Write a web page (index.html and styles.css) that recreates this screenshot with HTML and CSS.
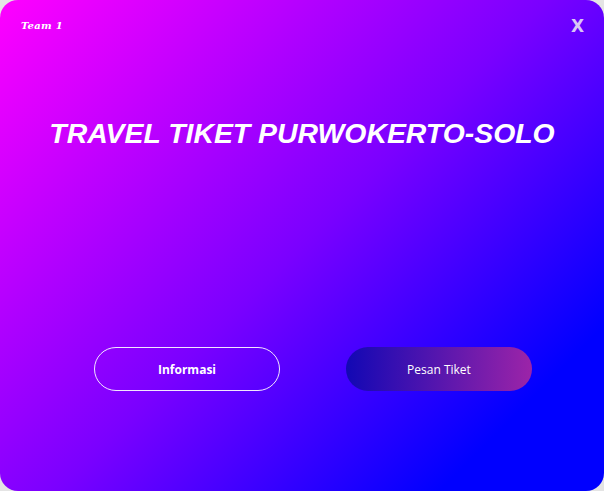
FILE: index.html
```html
<!DOCTYPE html>
<html>
<head>
<meta charset="utf-8">
<link rel="stylesheet" href="styles.css">
</head>
<body>
<div class="window">
  <div class="topbar">
    <span class="team">Team 1</span>
    <span class="close">X</span>
  </div>
  <h1 class="title">TRAVEL TIKET PURWOKERTO-SOLO</h1>
  <div class="actions">
    <button class="btn btn-outline">Informasi</button>
    <button class="btn btn-fill">Pesan Tiket</button>
  </div>
</div>
</body>
</html>
```
FILE: styles.css
```css
html, body { margin: 0; padding: 0; }
body {
  width: 604px;
  height: 491px;
  background: #e4e4e4;
  overflow: hidden;
}
.window {
  width: 604px;
  height: 491px;
  box-sizing: border-box;
  border-radius: 18px;
  background: linear-gradient(135deg, #ff00ff 0%, #7a00ff 50%, #0000ff 85%, #0000ff 100%);
  display: flex;
  flex-direction: column;
  font-family: "Open Sans", "DejaVu Sans", sans-serif;
  color: #fff;
}
.topbar {
  display: flex;
  justify-content: space-between;
  align-items: center;
  padding: 14px 20px 0 21px;
  height: 22px;
}
.team {
  font-family: "DejaVu Serif", serif;
  font-style: italic;
  font-weight: bold;
  font-size: 10px;
  letter-spacing: 0.3px;
}
.close {
  font-family: "DejaVu Sans", sans-serif;
  font-weight: bold;
  font-size: 17px;
  color: #d9c6f5;
  margin-top: 2px;
}
.title {
  margin: 80px 0 0 0;
  text-align: center;
  font-family: "Liberation Sans", Arial, sans-serif;
  font-size: 28.4px;
  font-weight: 700;
  font-style: italic;
  line-height: 34px;
  letter-spacing: 0px;
}
.actions {
  display: flex;
  gap: 66px;
  padding: 0 0 0 94px;
  margin-top: 197px;
}
.btn {
  width: 186px;
  height: 44px;
  border-radius: 22px;
  font-family: "Open Sans", "DejaVu Sans", sans-serif;
  font-size: 12px;
  color: #fff;
  padding: 0;
}
.btn-outline {
  background: transparent;
  border: 1px solid #f2e6ff;
  font-weight: 700;
}
.btn-fill {
  border: none;
  background: linear-gradient(90deg, #1208b4 0%, #9c24a8 100%);
  font-weight: 400;
}
```
